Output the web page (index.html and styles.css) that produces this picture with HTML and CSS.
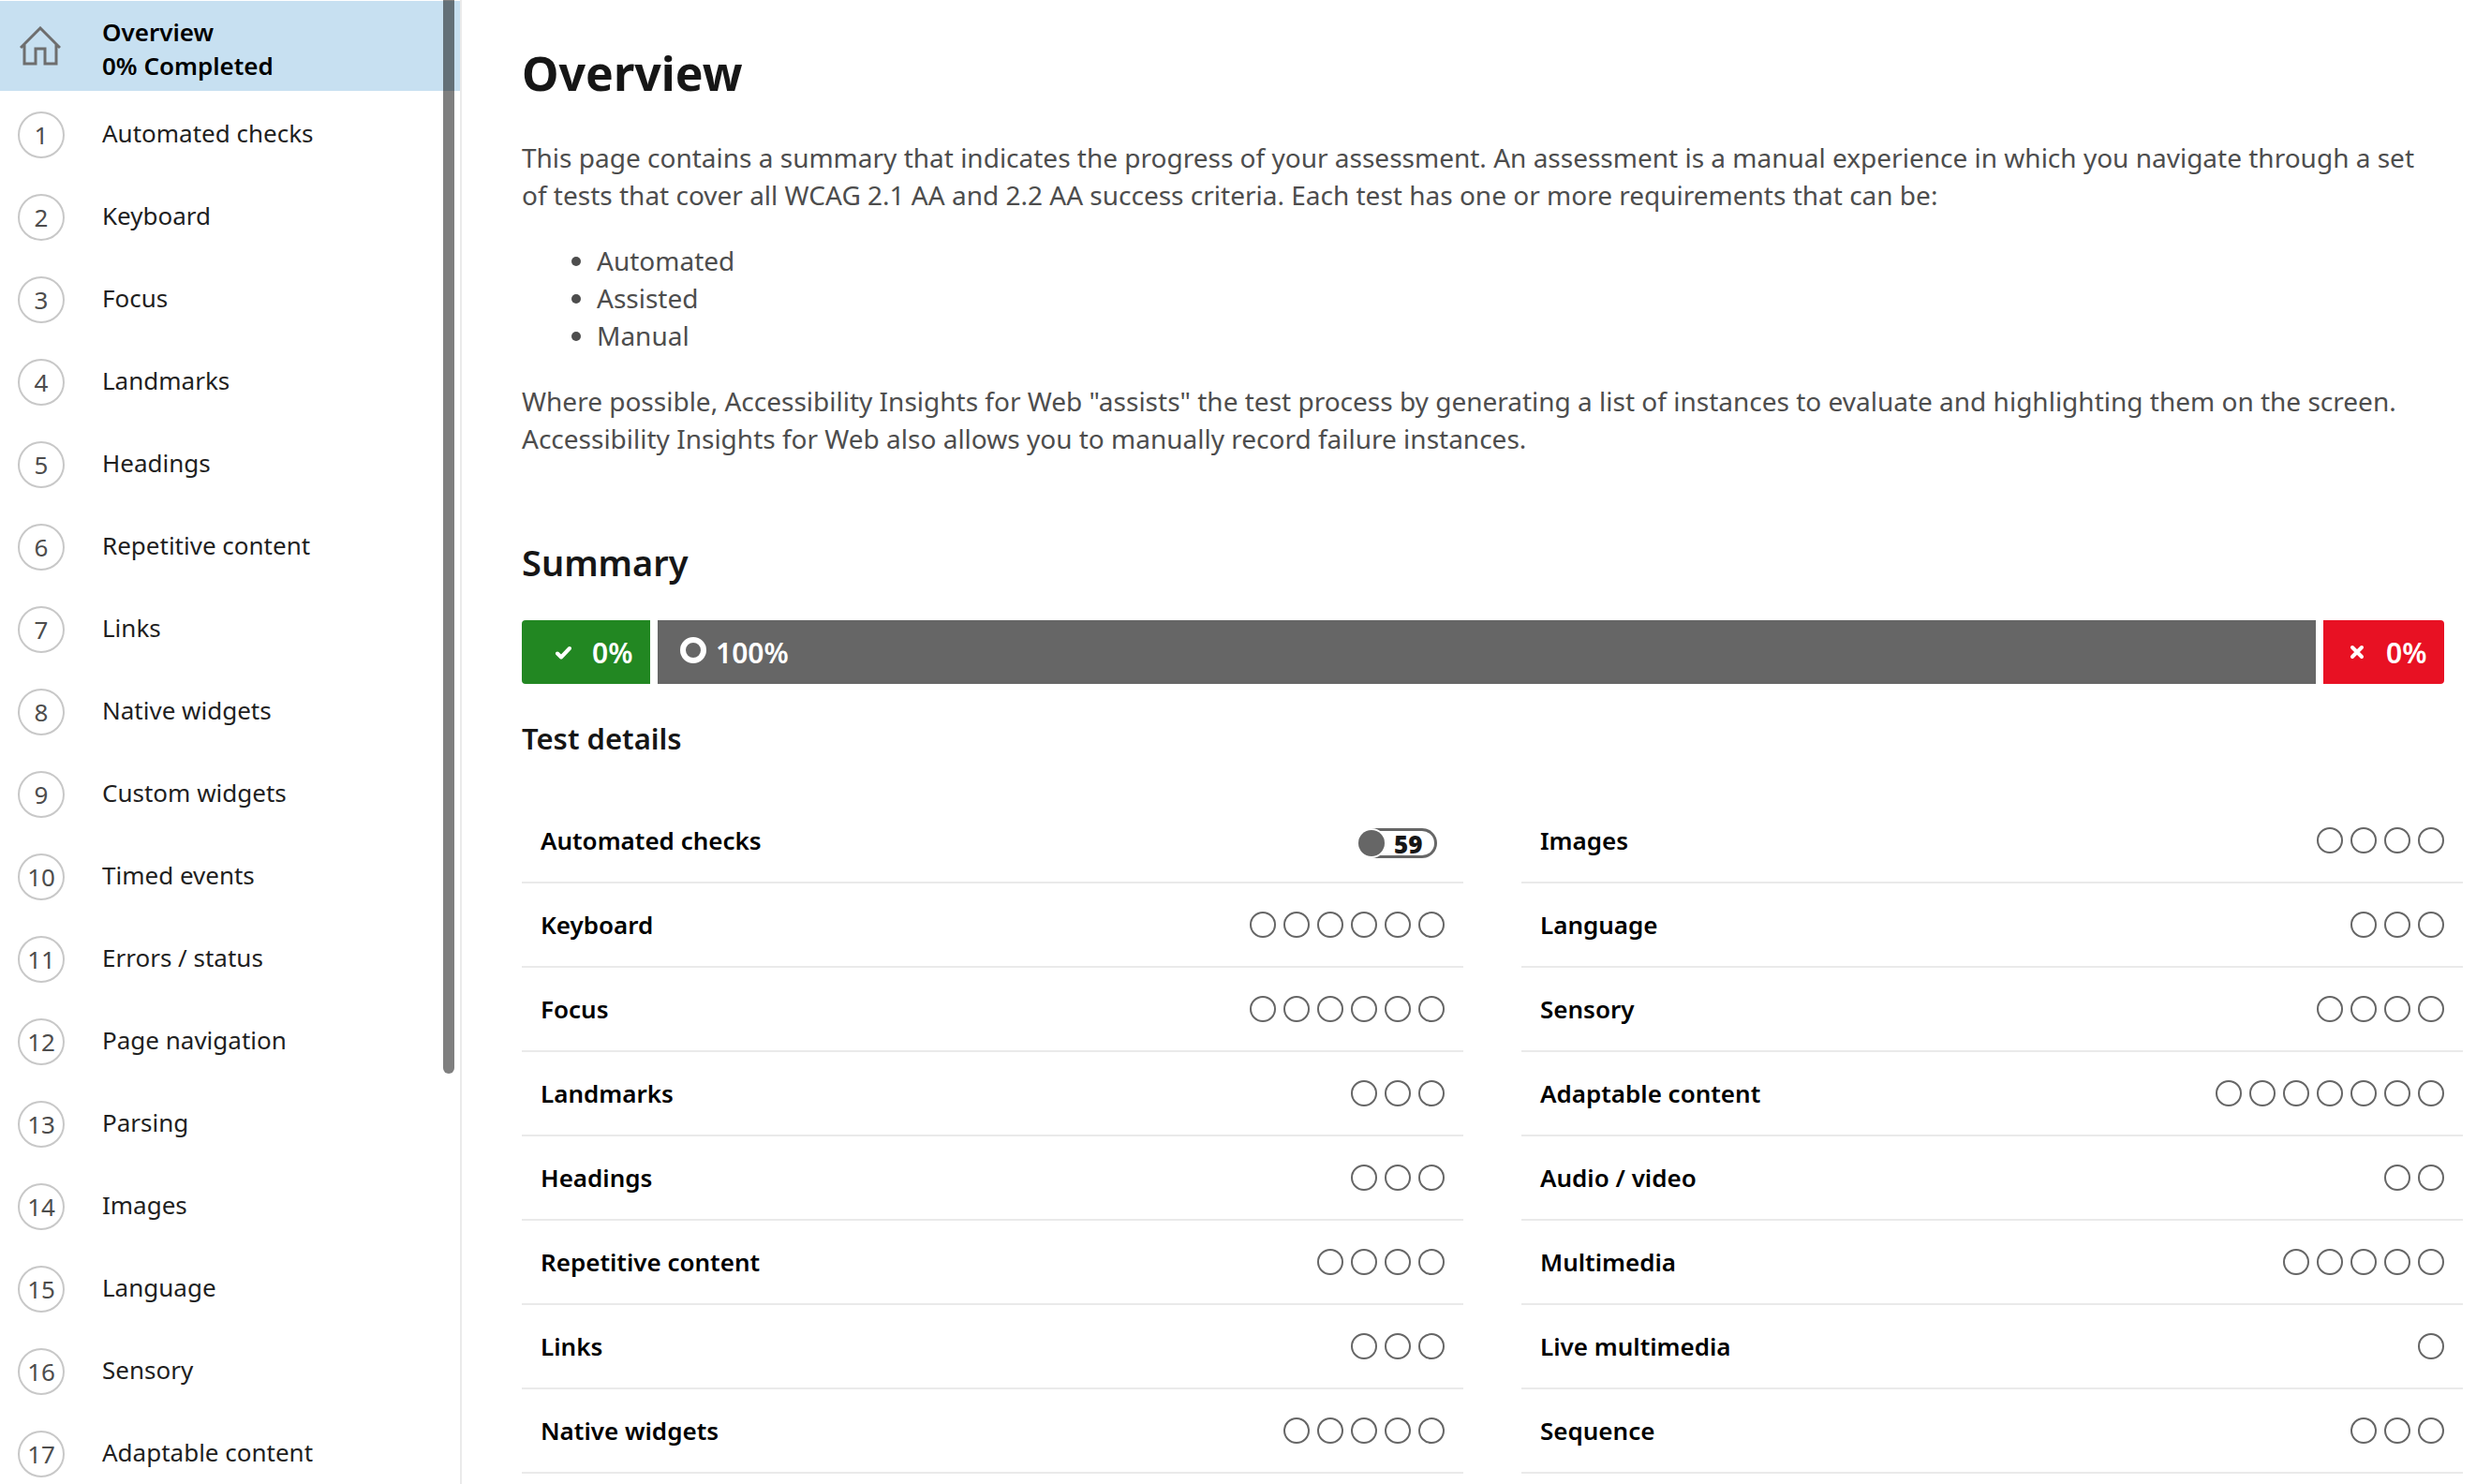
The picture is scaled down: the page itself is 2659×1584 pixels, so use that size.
FILE: index.html
```html
<!DOCTYPE html>
<html lang="en">
<head>
<meta charset="utf-8">
<title>Assessment overview</title>
<link rel="stylesheet" href="styles.css">
</head>
<body>
<div class="layout">
  <nav class="nav" aria-label="Tests">
    <a class="nav-item nav-overview" href="#overview" aria-current="page">
      <svg class="home-icon" viewBox="0 0 44 42" aria-hidden="true"><path d="M1 23 22 2 43 23M5 19V40H17V24H27V40H39V19" fill="none" stroke="#6e6e6e" stroke-width="3"/></svg>
      <span class="nav-label">Overview<br>0% Completed</span>
    </a>
    <ul class="nav-list">
      <li><a class="nav-item" href="#t1"><span class="num">1</span><span class="nav-label">Automated checks</span></a></li>
      <li><a class="nav-item" href="#t2"><span class="num">2</span><span class="nav-label">Keyboard</span></a></li>
      <li><a class="nav-item" href="#t3"><span class="num">3</span><span class="nav-label">Focus</span></a></li>
      <li><a class="nav-item" href="#t4"><span class="num">4</span><span class="nav-label">Landmarks</span></a></li>
      <li><a class="nav-item" href="#t5"><span class="num">5</span><span class="nav-label">Headings</span></a></li>
      <li><a class="nav-item" href="#t6"><span class="num">6</span><span class="nav-label">Repetitive content</span></a></li>
      <li><a class="nav-item" href="#t7"><span class="num">7</span><span class="nav-label">Links</span></a></li>
      <li><a class="nav-item" href="#t8"><span class="num">8</span><span class="nav-label">Native widgets</span></a></li>
      <li><a class="nav-item" href="#t9"><span class="num">9</span><span class="nav-label">Custom widgets</span></a></li>
      <li><a class="nav-item" href="#t10"><span class="num">10</span><span class="nav-label">Timed events</span></a></li>
      <li><a class="nav-item" href="#t11"><span class="num">11</span><span class="nav-label">Errors / status</span></a></li>
      <li><a class="nav-item" href="#t12"><span class="num">12</span><span class="nav-label">Page navigation</span></a></li>
      <li><a class="nav-item" href="#t13"><span class="num">13</span><span class="nav-label">Parsing</span></a></li>
      <li><a class="nav-item" href="#t14"><span class="num">14</span><span class="nav-label">Images</span></a></li>
      <li><a class="nav-item" href="#t15"><span class="num">15</span><span class="nav-label">Language</span></a></li>
      <li><a class="nav-item" href="#t16"><span class="num">16</span><span class="nav-label">Sensory</span></a></li>
      <li><a class="nav-item" href="#t17"><span class="num">17</span><span class="nav-label">Adaptable content</span></a></li>
    </ul>
    <div class="scroll-thumb"></div>
  </nav>

  <main class="main" id="overview">
    <div class="intro">
      <h1>Overview</h1>
      <p>This page contains a summary that indicates the progress of your assessment. An assessment is a manual experience in which you navigate through a set of tests that cover all WCAG 2.1 AA and 2.2 AA success criteria. Each test has one or more requirements that can be:</p>
      <ul>
        <li>Automated</li>
        <li>Assisted</li>
        <li>Manual</li>
      </ul>
      <p>Where possible, Accessibility Insights for Web "assists" the test process by generating a list of instances to evaluate and highlighting them on the screen. Accessibility Insights for Web also allows you to manually record failure instances.</p>
    </div>

    <section class="summary">
      <h2>Summary</h2>
      <div class="bar">
        <div class="seg pass"><svg class="seg-icon" viewBox="0 0 18 18" aria-hidden="true"><path d="M3 10.500 7 14.500 16 5" fill="none" stroke="#fff" stroke-width="4" stroke-linecap="round" stroke-linejoin="round"/></svg><span>0%</span></div>
        <div class="seg incomplete"><span class="ring"></span><span>100%</span></div>
        <div class="seg fail"><svg class="seg-icon" viewBox="0 0 18 18" aria-hidden="true"><path d="M4 4 14 14M14 4 4 14" fill="none" stroke="#fff" stroke-width="4" stroke-linecap="round"/></svg><span>0%</span></div>
      </div>
    </section>

    <section class="details">
      <h3>Test details</h3>
      <div class="columns">
        <ul class="tests">
          <li><span>Automated checks</span><span class="count"><i class="count-dot"></i><b class="count-num">59</b></span></li>
          <li><span>Keyboard</span><span class="dots"><i></i><i></i><i></i><i></i><i></i><i></i></span></li>
          <li><span>Focus</span><span class="dots"><i></i><i></i><i></i><i></i><i></i><i></i></span></li>
          <li><span>Landmarks</span><span class="dots"><i></i><i></i><i></i></span></li>
          <li><span>Headings</span><span class="dots"><i></i><i></i><i></i></span></li>
          <li><span>Repetitive content</span><span class="dots"><i></i><i></i><i></i><i></i></span></li>
          <li><span>Links</span><span class="dots"><i></i><i></i><i></i></span></li>
          <li><span>Native widgets</span><span class="dots"><i></i><i></i><i></i><i></i><i></i></span></li>
        </ul>
        <ul class="tests">
          <li><span>Images</span><span class="dots"><i></i><i></i><i></i><i></i></span></li>
          <li><span>Language</span><span class="dots"><i></i><i></i><i></i></span></li>
          <li><span>Sensory</span><span class="dots"><i></i><i></i><i></i><i></i></span></li>
          <li><span>Adaptable content</span><span class="dots"><i></i><i></i><i></i><i></i><i></i><i></i><i></i></span></li>
          <li><span>Audio / video</span><span class="dots"><i></i><i></i></span></li>
          <li><span>Multimedia</span><span class="dots"><i></i><i></i><i></i><i></i><i></i></span></li>
          <li><span>Live multimedia</span><span class="dots"><i></i></span></li>
          <li><span>Sequence</span><span class="dots"><i></i><i></i><i></i></span></li>
        </ul>
      </div>
    </section>
  </main>
</div>
</body>
</html>
```
FILE: styles.css
```css
* {
  box-sizing: border-box;
}

body {
  margin: 0;
  background: #fff;
  color: #161616;
  font-family: "Noto Sans", "Open Sans", sans-serif;
}

h1, h2, h3, p, ul {
  margin: 0;
  padding: 0;
}

.layout {
  display: flex;
  height: 100vh;
  overflow: hidden;
}

/* Side navigation */
.nav {
  position: relative;
  flex: 0 0 493px;
  padding-top: 1px;
  border-right: 2px solid #eaeaea;
  overflow: hidden;
}

.nav-list {
  margin-top: 3px;
  list-style: none;
}

.nav-item {
  display: flex;
  align-items: center;
  gap: 40px;
  height: 88px;
  padding-left: 19px;
  color: #1f1f1f;
  font-size: 26px;
  line-height: 36px;
  text-decoration: none;
}

.nav-label {
  padding-bottom: 4px;
}

.nav-overview {
  height: 96px;
  background: #c7e0f1;
  color: #000;
  font-weight: 600;
}

.nav-overview .nav-label {
  padding: 6px 0 0;
}

.home-icon {
  width: 44px;
  height: 42px;
  margin: 0 4px 0 2px;
}

.num {
  display: flex;
  align-items: center;
  justify-content: center;
  width: 50px;
  height: 50px;
  border: 2px solid #c8c8c8;
  border-radius: 50%;
  color: #4d4d4d;
}

.scroll-thumb {
  position: absolute;
  top: 0;
  right: 6px;
  width: 12px;
  height: 1146px;
  border-radius: 0 0 6px 6px;
  background: rgba(0, 0, 0, 0.5);
}

/* Main pane */
.main {
  flex: 1;
  min-width: 0;
  padding: 46px 30px 0 64px;
}

.intro,
.summary {
  padding-right: 20px;
}

h1 {
  margin-bottom: 38px;
  font-size: 50px;
  font-weight: 700;
  line-height: 64px;
}

.intro p,
.intro ul {
  color: #4d4d4d;
  font-size: 28px;
  line-height: 40px;
}

.intro ul {
  margin: 30px 0;
  padding-left: 80px;
}

h2 {
  margin: 86px 0 36px;
  font-size: 38px;
  font-weight: 600;
  line-height: 52px;
}

.bar {
  display: flex;
  gap: 8px;
  height: 68px;
}

.seg {
  display: flex;
  align-items: center;
  gap: 22px;
  color: #fff;
  font-size: 30px;
  font-weight: 600;
}

.pass {
  width: 137px;
  padding-left: 35px;
  border-radius: 4px 0 0 4px;
  background: #228722;
}

.incomplete {
  flex: 1;
  gap: 10px;
  padding-left: 24px;
  background: #666;
}

.fail {
  width: 129px;
  padding-left: 27px;
  border-radius: 0 4px 4px 0;
  background: #e81123;
}

.seg-icon {
  width: 18px;
  height: 18px;
}

.ring {
  width: 28px;
  height: 28px;
  margin-bottom: 4px;
  border: 6px solid #fff;
  border-radius: 50%;
}

/* Test details */
h3 {
  margin: 36px 0 43px;
  font-size: 31px;
  font-weight: 600;
  line-height: 44px;
}

.columns {
  display: grid;
  grid-template-columns: 1fr 1fr;
  gap: 62px;
}

.tests {
  list-style: none;
}

.tests li {
  display: flex;
  align-items: center;
  justify-content: space-between;
  height: 90px;
  padding: 0 20px;
  border-bottom: 2px solid #eaeaea;
  color: #000;
  font-size: 26px;
  font-weight: 600;
}

.dots {
  display: flex;
  gap: 8px;
}

.dots i {
  width: 28px;
  height: 28px;
  border: 2px solid #666;
  border-radius: 50%;
}

.count {
  display: flex;
  align-items: center;
  margin: 6px 8px 0 0;
}

.count-dot {
  z-index: 1;
  width: 28px;
  height: 28px;
  margin-right: -14px;
  border-radius: 50%;
  background: #666;
  box-shadow: 0 0 0 2px #fff;
}

.count-num {
  width: 70px;
  height: 32px;
  padding-left: 24px;
  border: 3px solid #666;
  border-left: 0;
  border-radius: 0 16px 16px 0;
  color: #161616;
  font-size: 26px;
  line-height: 28px;
}
```
